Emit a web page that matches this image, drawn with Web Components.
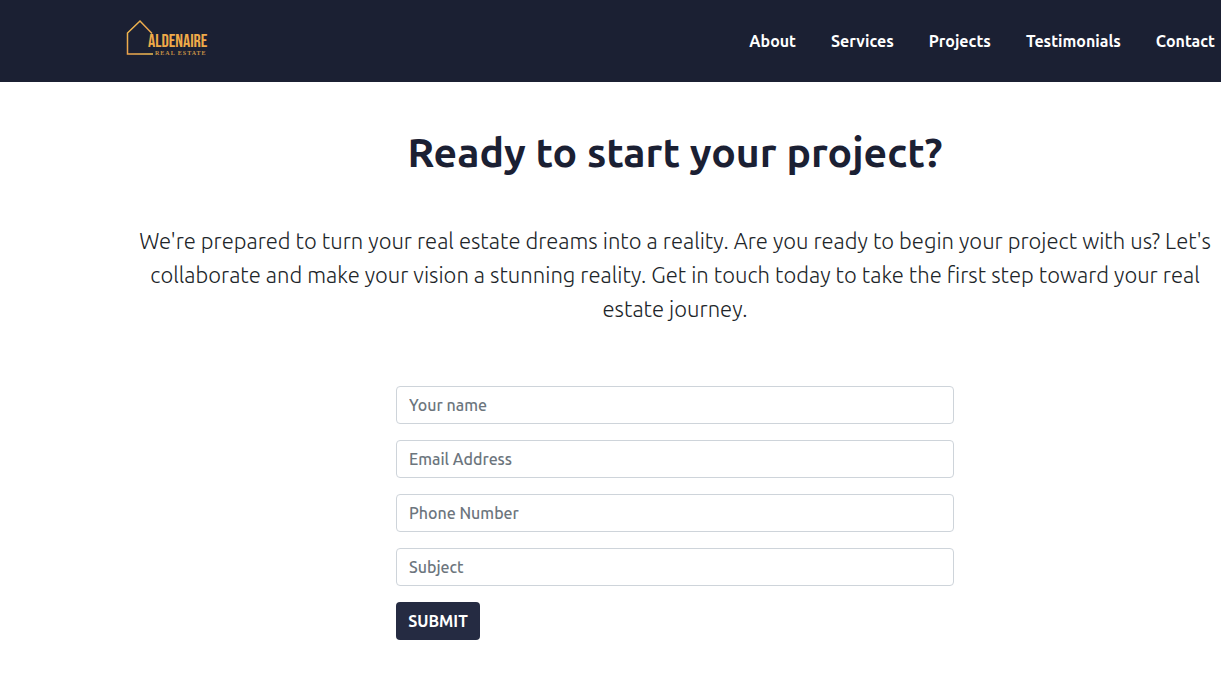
<!DOCTYPE html>
<html lang="en">
<head>
<meta charset="utf-8">
<meta name="viewport" content="width=device-width, initial-scale=1">
<title>Aldenaire Real Estate</title>
<style>
  body { margin: 0; overflow-x: clip; background: #fff; color: #1b2033; font-family: Ubuntu, "Noto Sans", sans-serif; }
</style>
</head>
<body>
<site-header>
  <brand-logo slot="brand"></brand-logo>
  <nav-link href="#about">About</nav-link>
  <nav-link href="#services">Services</nav-link>
  <nav-link href="#projects">Projects</nav-link>
  <nav-link href="#testimonials">Testimonials</nav-link>
  <nav-link href="#contact">Contact</nav-link>
</site-header>
<contact-section>
  <span slot="title">Ready to start your project?</span>
  <span slot="lead">We're prepared to turn your real estate dreams into a reality. Are you ready to begin your project with us? Let's collaborate and make your vision a stunning reality. Get in touch today to take the first step toward your real estate journey.</span>
  <contact-form></contact-form>
</contact-section>

<script>
class BaseElement extends HTMLElement {
  connectedCallback() {
    if (this.shadowRoot) return;
    this.attachShadow({ mode: 'open' }).innerHTML = this.render();
  }
}

customElements.define('brand-logo', class extends BaseElement {
  render() {
    return `
      <style>
        :host { display: block; }
        a, svg { display: block; }
        .name { font: 400 18px "Bebas Neue", "Ubuntu Condensed", sans-serif; }
        .tag { font: 700 6px "Liberation Serif", serif; letter-spacing: 1px; }
      </style>
      <a href="#" aria-label="Aldenaire Real Estate">
        <svg width="100" height="44" viewBox="0 0 100 44">
          <defs>
            <linearGradient id="gold" x1="0" y1="0" x2="1" y2="1">
              <stop offset="0" stop-color="#f2c04f"/>
              <stop offset=".5" stop-color="#eba24c"/>
              <stop offset="1" stop-color="#f0bd52"/>
            </linearGradient>
          </defs>
          <path d="M32 14.500 20 2 7.500 14V35H33" fill="none" stroke="url(#gold)" stroke-width="1.500"/>
          <text class="name" x="28" y="28" fill="#efaa49">ALDENAIRE</text>
          <text class="tag" x="35" y="36" fill="#c99347">REAL ESTATE</text>
        </svg>
      </a>`;
  }
});

customElements.define('nav-link', class extends BaseElement {
  render() {
    return `
      <style>
        :host { display: block; }
        a { color: #fff; font-size: 16px; font-weight: 700; line-height: 24px; text-decoration: none; }
        a:hover { color: #efaa49; }
      </style>
      <a href="${this.getAttribute('href')}"><slot></slot></a>`;
  }
});

customElements.define('site-header', class extends BaseElement {
  render() {
    return `
      <style>
        :host { display: block; background: #1b2033; }
        header { display: flex; align-items: center; justify-content: space-between; box-sizing: border-box; min-height: 82px; padding: 16px 6px 16px 120px; }
        nav { display: flex; gap: 35px; }
      </style>
      <header>
        <slot name="brand"></slot>
        <nav aria-label="Main"><slot></slot></nav>
      </header>`;
  }
});

customElements.define('contact-section', class extends BaseElement {
  render() {
    return `
      <style>
        :host { display: block; }
        section { margin-right: -129px; padding: 40px 120px; text-align: center; }
        h2 { margin: 0; font-size: 41px; font-weight: 700; line-height: 60px; }
        p { margin: 42px 0 60px; color: #212529; font-size: 22px; font-weight: 300; line-height: 34px; }
      </style>
      <section>
        <h2><slot name="title"></slot></h2>
        <p><slot name="lead"></slot></p>
        <slot></slot>
      </section>`;
  }
});

customElements.define('text-field', class extends BaseElement {
  render() {
    const label = this.getAttribute('label');
    return `
      <style>
        :host { display: block; }
        input { display: block; box-sizing: border-box; width: 100%; height: 38px; padding: 6px 12px; border: 1px solid #ced4da; border-radius: 4px; background: #fff; color: #495057; font-family: inherit; font-size: 16px; font-weight: 500; }
        input::placeholder { color: #6c757d; opacity: 1; }
        input:focus { outline: 2px solid #252b42; }
      </style>
      <label><input type="${this.getAttribute('type') || 'text'}" placeholder="${label}" aria-label="${label}"></label>`;
  }
});

customElements.define('contact-form', class extends BaseElement {
  render() {
    return `
      <style>
        :host { display: block; max-width: 558px; margin: 0 auto; }
        form { display: grid; gap: 16px; text-align: left; }
        button { justify-self: start; min-width: 84px; height: 38px; padding: 0 12px; border: 0; border-radius: 4px; background: #252b42; color: #fff; font-family: inherit; font-size: 16px; font-weight: 700; }
      </style>
      <form>
        <text-field label="Your name"></text-field>
        <text-field label="Email Address" type="email"></text-field>
        <text-field label="Phone Number" type="tel"></text-field>
        <text-field label="Subject"></text-field>
        <button type="submit">SUBMIT</button>
      </form>`;
  }
});
</script>
</body>
</html>
